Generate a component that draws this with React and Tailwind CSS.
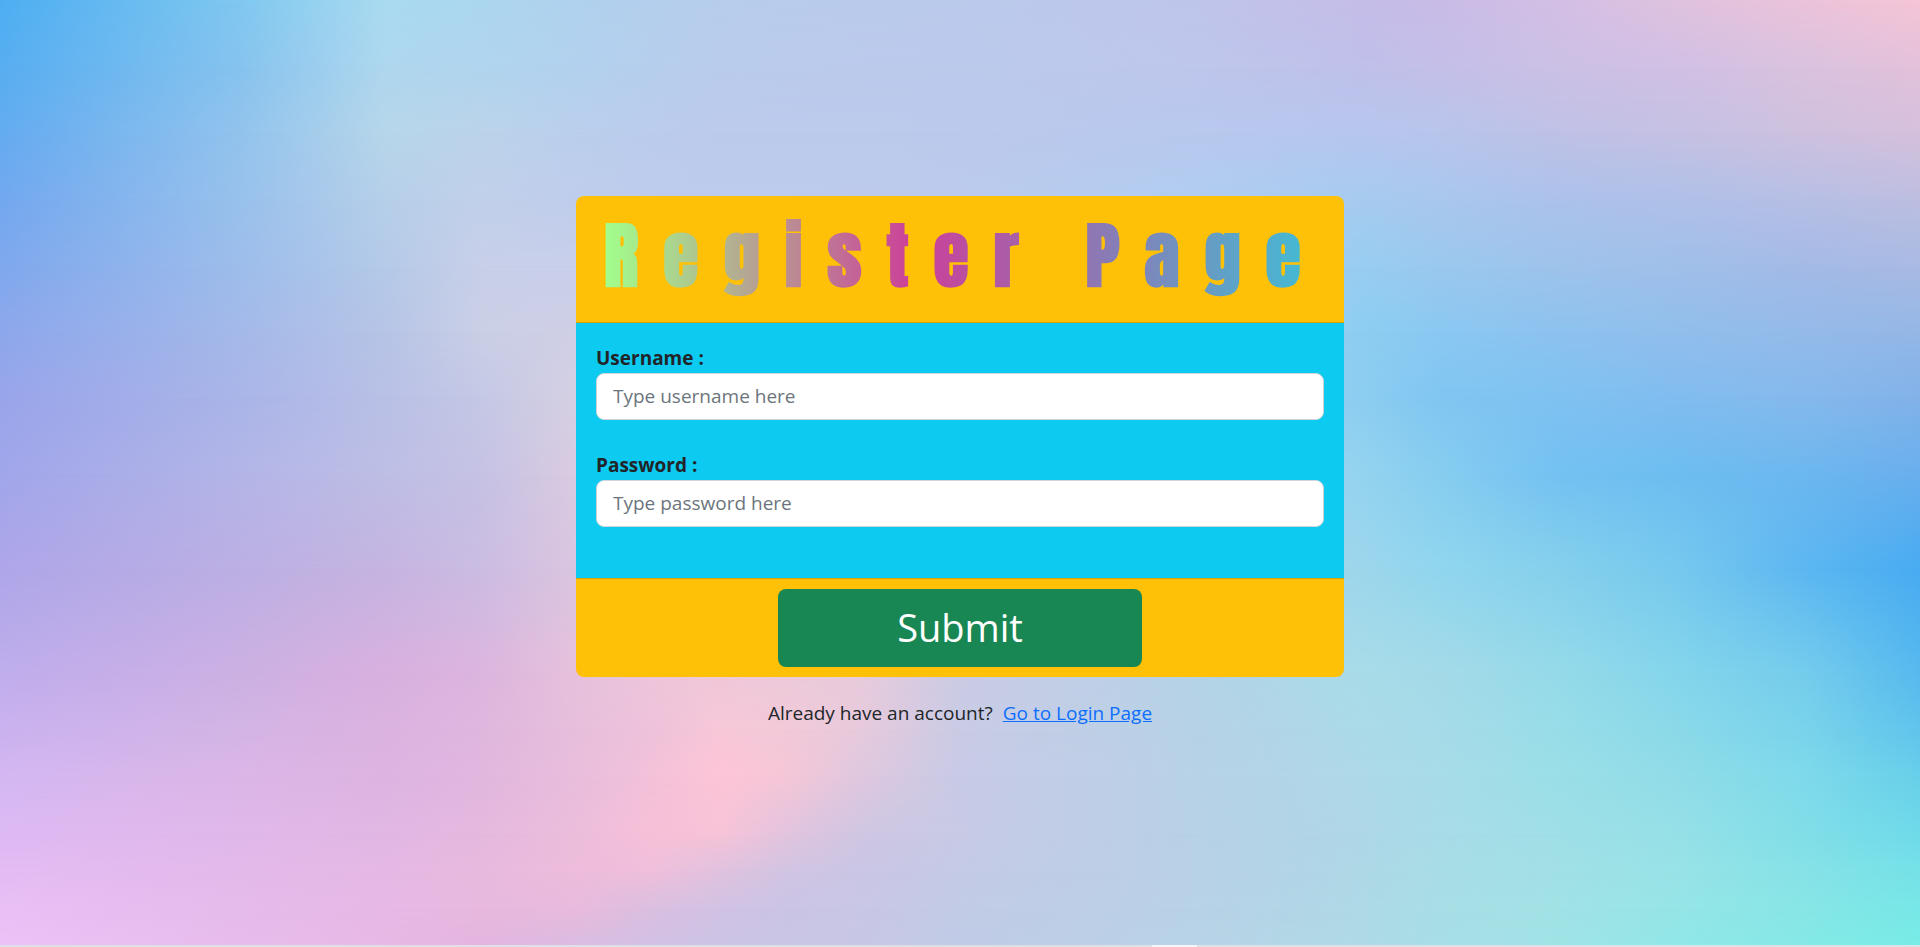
const stops = [0, 12.5, 20, 25, 30, 34, 37.5, 41, 45, 50, 62.5, 71, 75, 81, 87.5, 94, 100];

const rows = [
  { y: 0, c: ["#4eaef2", "#80c8f0", "#a9dbf0", "#acd7ee", "#b0d2ee", "#b4cfed", "#b7cdec", "#b9ccec", "#bacbec", "#bbcaec", "#bfc5eb", "#c5bde9", "#c9bce7", "#d3bfe5", "#e0c2df", "#ebc3da", "#f6c5d6"] },
  { y: 7, c: ["#57aef1", "#86c3ee", "#aed7ee", "#b0d5ee", "#b2d1ee", "#b6ceed", "#b9ccec", "#bacbec", "#bbcaec", "#bbcaec", "#bec6ec", "#bfc0ea", "#c4bfe8", "#ccc0e5", "#d1c0e4", "#dac2df", "#e3c1da"] },
  { y: 14, c: ["#64abf0", "#92c3ed", "#b6d6ea", "#bbd3ea", "#bacfec", "#bbccec", "#bccaec", "#bccaec", "#bccaec", "#bbc9ec", "#b8c8ee", "#b7c6ee", "#b8c5ec", "#bfc1e6", "#c5c1e3", "#cec1de", "#d5c0dd"] },
  { y: 21, c: ["#72a8ef", "#98c1ec", "#b6cfe9", "#c1d0ea", "#bfcdec", "#becbec", "#bdcbec", "#bdcbec", "#bdcaec", "#bbcbed", "#b0cdf0", "#a6cbef", "#a9c7ed", "#acc2eb", "#b0c0e8", "#b7bfe5", "#bdbee0"] },
  { y: 28, c: ["#7fa8ed", "#9dbdeb", "#b4cae8", "#c8cfe8", "#c8cfea", "#c4cdeb", "#c0cdec", "#bfccec", "#bdcaec", "#bbcbed", "#aacff0", "#98cdf1", "#9bc8ee", "#9ec3eb", "#a0bfe9", "#a4bae6", "#a9bae3"] },
  { y: 35, c: ["#8da7ec", "#a4b9e9", "#b6c4e6", "#cacfe6", "#cfcfe6", "#cfcfe7", "#c8cfea", "#c6cfea", "#c4cfea", "#bbceec", "#a8d0ef", "#8dcdf2", "#8ac8f2", "#8dc2ef", "#91beec", "#94baea", "#94b7e6"] },
  { y: 42, c: ["#99a5ea", "#aab5e8", "#b9c0e6", "#c4c8e5", "#d5d0e3", "#d3d0e5", "#cdd0e8", "#c8cfe9", "#c4cfea", "#bbceec", "#a8d0ef", "#8ccdf1", "#80c6f1", "#7ec2f1", "#81bcef", "#85b9ec", "#82b2e9"] },
  { y: 50, c: ["#a1a6ea", "#b3b5e7", "#bdbee5", "#c5c2e4", "#dacbe1", "#dacfe2", "#d9cfe2", "#d3cfe5", "#c8cfe8", "#bdcfeb", "#a7d3ee", "#94d3ef", "#86cdf0", "#74c1f2", "#6dbdf1", "#6cb7ef", "#69afed"] },
  { y: 60, c: ["#aea6e9", "#bcafe3", "#c5b4e1", "#cbbce2", "#dac5e0", "#e1cadd", "#e2ccde", "#dccde0", "#d0cfe5", "#bfd0ea", "#a8d7ea", "#9cd6ec", "#90d6ee", "#85d0ec", "#76c8ee", "#5cb7f1", "#48abf1"] },
  { y: 71, c: ["#bfadec", "#ccb0e3", "#d8b0df", "#dcb5de", "#e6c1dc", "#edc5da", "#f0c8d9", "#eccada", "#e7cbdc", "#cbcbe5", "#b4d3e7", "#a8dce8", "#a4dae8", "#95dae9", "#84d5eb", "#74ccec", "#57b9ee"] },
  { y: 77, c: ["#cab2ef", "#d3b4e5", "#dbb3e0", "#dfb6de", "#e7bfdc", "#efc2da", "#f7c7d8", "#f2c9d8", "#e6cadc", "#c9cbe5", "#b6d2e6", "#abdae7", "#a6dbe8", "#98dde8", "#8ad9e9", "#79d3eb", "#60c4ec"] },
  { y: 82, c: ["#d4b7f1", "#dbb6e7", "#ddb4e1", "#e1b7df", "#e9bddc", "#f3c1d9", "#fdc5d7", "#f5c6d7", "#dec8df", "#c8cae6", "#b7d2e6", "#aed9e7", "#a7dce7", "#9bdfe7", "#90dce8", "#7edaea", "#68cfea"] },
  { y: 88, c: ["#ddb9f3", "#e0b8ea", "#e1b7e3", "#e5b8df", "#ecbddb", "#f6c0d8", "#f7c3d7", "#e2c4de", "#cfc6e3", "#c7cae5", "#b7d1e6", "#aed7e6", "#a8dce7", "#9fdfe6", "#95e0e7", "#80dee8", "#6fdae9"] },
  { y: 92, c: ["#e4bcf4", "#e3b9ea", "#e5b8e4", "#e8b9df", "#eebcdb", "#efbfdb", "#e0c2df", "#d1c4e3", "#cac6e4", "#c4cae5", "#b8d1e6", "#aed8e6", "#a8dde6", "#a1e0e5", "#97e3e6", "#86e2e7", "#75e1e8"] },
  { y: 96, c: ["#e9bff6", "#e5bbeb", "#e7b8e5", "#e8b8df", "#e8badd", "#dabfe1", "#d1c2e4", "#cbc4e4", "#c8c7e4", "#c2cbe6", "#b8d2e6", "#aed9e6", "#a8dee6", "#a1e2e6", "#95e5e6", "#87e6e6", "#77e7e7"] },
  { y: 100, c: ["#ecc2f7", "#e7bcec", "#e8b8e4", "#e4b4df", "#d9bce1", "#d1c1e4", "#ccc4e3", "#c9c5e4", "#c7c7e4", "#c0cbe6", "#b8d3e6", "#aedae6", "#a7dee6", "#a0e3e6", "#90e7e6", "#84e9e6", "#78ece6"] },
];

function Backdrop() {
  return (
    <svg aria-hidden="true" className="absolute inset-0 -z-10 h-full w-full" viewBox="0 0 100 100" preserveAspectRatio="none">
      <defs>
        {rows.map((row, i) => (
          <linearGradient key={i} id={`row${i}`}>
            {row.c.map((color, j) => (
              <stop key={j} offset={`${stops[j]}%`} stopColor={color} />
            ))}
          </linearGradient>
        ))}
        {rows.slice(1).map((row, i) => (
          <linearGradient key={i} id={`fade${i + 1}`} gradientUnits="userSpaceOnUse" x1="0" x2="0" y1={rows[i].y} y2={row.y}>
            <stop offset="0" stopColor="#fff" stopOpacity="0" />
            <stop offset="1" stopColor="#fff" />
          </linearGradient>
        ))}
        {rows.slice(1).map((row, i) => (
          <mask key={i} id={`mask${i + 1}`} maskUnits="userSpaceOnUse" x="0" y="0" width="100" height="100">
            <rect width="100" height="100" fill={`url(#fade${i + 1})`} />
          </mask>
        ))}
      </defs>
      {rows.map((row, i) => (
        <rect key={i} width="100" height="100" fill={`url(#row${i})`} mask={i ? `url(#mask${i})` : undefined} />
      ))}
    </svg>
  );
}

function Field({ id, label, type, placeholder }) {
  return (
    <div className="flex flex-col">
      <label htmlFor={id} className="text-[19px] leading-[29px] font-bold">{label}</label>
      <input
        id={id}
        type={type}
        placeholder={placeholder}
        className="h-[47px] w-full rounded-lg border border-[#ced4da] bg-white px-4 text-[19px] placeholder:text-[#6c757d]"
      />
    </div>
  );
}

export default function App() {
  return (
    <div className="relative isolate flex min-h-screen flex-col font-['Open_Sans','Noto_Sans',sans-serif] text-[#212529]">
      <Backdrop />
      <main className="flex grow flex-col items-center justify-center px-4 pb-[22px]">
        <form className="w-full max-w-[768px] overflow-hidden rounded-lg bg-[#ffc107]" onSubmit={(e) => e.preventDefault()}>
          <header className="border-b border-[#d5a10d] pt-[10px] pb-4 pl-7">
            <h1 className="bg-[linear-gradient(90deg,#a1ff8b_0%,#cc3f99_42%,#3fbfd5_97%)] bg-clip-text font-['Anton','Impact','Roboto',sans-serif] text-[72px] leading-[100px] font-black tracking-[25px] whitespace-nowrap text-transparent">
              Register Page
            </h1>
          </header>
          <div className="flex flex-col gap-[31px] bg-[#0dcaf0] px-5 pt-[21px] pb-[51px]">
            <Field id="username" label="Username :" type="text" placeholder="Type username here" />
            <Field id="password" label="Password :" type="password" placeholder="Type password here" />
          </div>
          <footer className="flex justify-center border-t border-[#d5a10d] py-[10px]">
            <button type="submit" className="h-[78px] w-[364px] rounded-lg bg-[#198754] text-[38px] text-white">Submit</button>
          </footer>
        </form>
        <p className="mt-[21px] text-[19px] leading-[30px]">
          Already have an account?
          <a href="#login" className="ml-[10px] text-[#0d6efd] underline">Go to Login Page</a>
        </p>
      </main>
      <div aria-hidden="true" className="flex h-[2px] bg-[#dde1e6]">
        <div className="ml-[60%] w-[45px] bg-[#f3f5f8]" />
      </div>
    </div>
  );
}
